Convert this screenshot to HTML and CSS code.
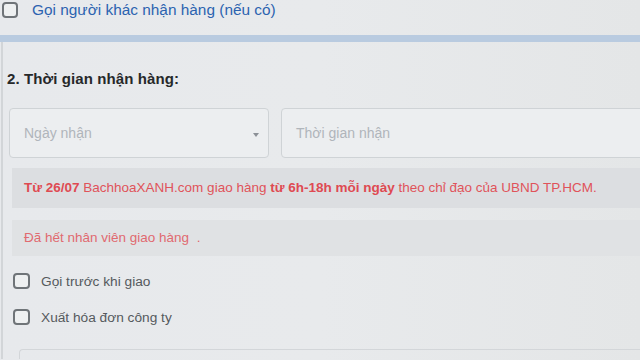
FILE: index.html
```html
<!DOCTYPE html>
<html lang="vi">
<head>
<meta charset="utf-8">
<link rel="stylesheet" href="styles.css">
</head>
<body>
<div class="page">
  <label class="check top-check">
    <span class="box"></span>
    <span class="check-label blue">Gọi người khác nhận hàng (nếu có)</span>
  </label>
  <div class="divider"></div>
  <section class="panel">
    <h2 class="title">2. Thời gian nhận hàng:</h2>
    <div class="fields">
      <div class="field select">
        <span class="placeholder">Ngày nhận</span>
        <span class="caret"></span>
      </div>
      <div class="field input">
        <span class="placeholder">Thời gian nhận</span>
      </div>
    </div>
    <div class="notice"><b>Từ 26/07</b> BachhoaXANH.com giao hàng <b>từ 6h-18h mỗi ngày</b> theo chỉ đạo của UBND TP.HCM.</div>
    <div class="notice small">Đã hết nhân viên giao hàng &nbsp;.</div>
    <div class="options">
      <label class="check opt">
        <span class="box"></span>
        <span class="check-label">Gọi trước khi giao</span>
      </label>
      <label class="check opt">
        <span class="box"></span>
        <span class="check-label">Xuất hóa đơn công ty</span>
      </label>
    </div>
    <div class="next-box"></div>
  </section>
</div>
</body>
</html>
```
FILE: styles.css
```css
* { box-sizing: border-box; }
html, body { margin: 0; padding: 0; }
body {
  width: 640px;
  height: 360px;
  overflow: hidden;
  font-family: "Liberation Sans", Arial, sans-serif;
  background: linear-gradient(90deg, #e7e9ec 0%, #e8eaec 50%, #e4e6e7 100%);
}
.page { display: flex; flex-direction: column; }
.check { display: flex; align-items: center; }
.box {
  flex: none;
  width: 16px;
  height: 16px;
  border: 2px solid #6f7478;
  border-radius: 4px;
  background: #eef0f1;
}
.top-check { padding: 1px 0 0 2px; height: 34px; align-items: flex-start; }
.top-check .box { margin-top: 1px; }
.top-check .check-label {
  margin-left: 14px;
  font-size: 15.4px;
  line-height: 18px;
}
.blue { color: #2c63b0; }
.divider {
  height: 7px;
  background: #b9cbe0;
  margin-top: 1px;
}
.panel {
  border-left: 2px solid #d2d5d8;
  margin-left: 1px;
  padding: 28px 0 0 2px;
}
.title {
  margin: 0 0 0 2px;
  font-size: 15px;
  line-height: 18px;
  font-weight: bold;
  color: #26282a;
  letter-spacing: 0.1px;
}
.fields {
  display: flex;
  gap: 12px;
  margin: 20px 0 0 4px;
}
.field {
  height: 50px;
  border: 1px solid #cfd3d6;
  border-radius: 4px;
  background: #eceef0;
  display: flex;
  align-items: center;
  padding: 0 14px;
  position: relative;
}
.select { width: 260px; }
.input { flex: 1; margin-right: -10px; }
.placeholder {
  font-size: 14px;
  color: #b0b5bb;
}
.caret {
  position: absolute;
  right: 9px;
  top: 24px;
  width: 0;
  height: 0;
  border-left: 3px solid transparent;
  border-right: 3px solid transparent;
  border-top: 4px solid #8b9096;
}
.notice {
  margin: 10px 0 0 7px;
  height: 40px;
  line-height: 40px;
  background: #dcdee1;
  color: #e0535a;
  font-size: 13.5px;
  padding-left: 12px;
  white-space: nowrap;
}
.notice b { font-weight: bold; color: #df4a52; }
.notice.small {
  margin-top: 12px;
  height: 36px;
  line-height: 36px;
  background: #e0e2e4;
  color: #e06a70;
}
.options {
  display: flex;
  flex-direction: column;
  gap: 20px;
  margin: 17px 0 0 8px;
}
.opt .box { width: 17px; height: 16px; }
.opt .check-label {
  margin-left: 11px;
  font-size: 13.7px;
  color: #55595d;
}
.next-box {
  margin: 24px 0 0 14px;
  height: 10px;
  border-top: 1px solid #d3d6d9;
  border-left: 1px solid #d3d6d9;
  border-radius: 4px 0 0 0;
}
```
